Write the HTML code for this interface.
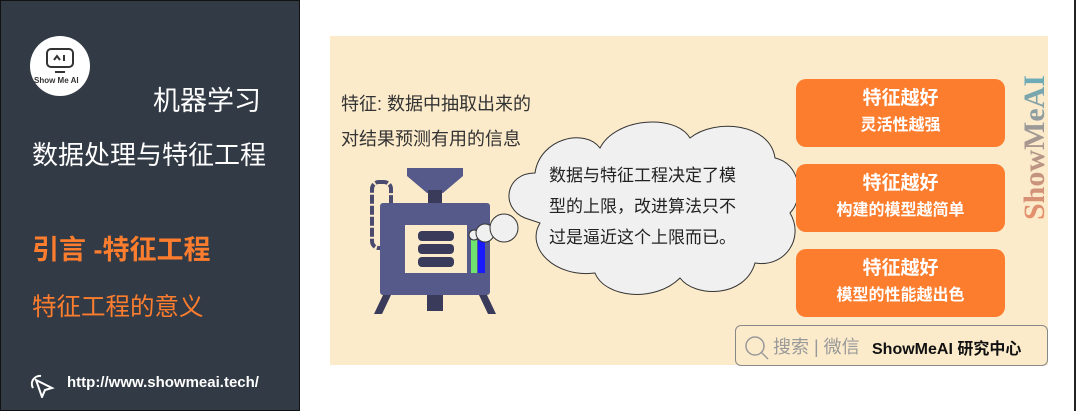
<!DOCTYPE html>
<html><head><meta charset="utf-8"><style>
*{margin:0;padding:0;box-sizing:border-box}
body{width:1080px;height:411px;background:#fff;position:relative;overflow:hidden;font-family:"Liberation Sans","Noto Sans CJK SC",sans-serif}
.left{position:absolute;left:0;top:0;width:300px;height:411px;background:#323a45;border:1px solid #111}
.t{position:absolute;white-space:nowrap}
.panel{position:absolute;left:330px;top:36px;width:718px;height:329px;background:#fcebcb}
.box{position:absolute;left:796px;width:209px;height:68px;background:#fd7d2e;border-radius:10px;color:#fff;text-align:center;font-weight:bold}
.box .a{font-size:19px;margin-top:8px;line-height:24px}
.box .b{font-size:16px;margin-top:5px;line-height:20px}
</style></head><body>
<div class="left">
 <div style="position:absolute;left:29px;top:35px;width:60px;height:60px;border-radius:50%;background:#fff"></div>
 <svg style="position:absolute;left:44px;top:46px" width="30" height="28" viewBox="0 0 30 28"><rect x="2" y="2" width="26" height="18" rx="4" fill="none" stroke="#333" stroke-width="2"/><path d="M9 13l3-4 3 4M19 8v6M10 25h10" stroke="#333" stroke-width="2" fill="none"/></svg>
 <div class="t" style="left:33px;top:75px;font-size:8px;font-weight:bold;color:#333">Show Me AI</div>
 <div class="t" style="left:152px;top:78px;font-size:27px;color:#fff">机器学习</div>
 <div class="t" style="left:31px;top:134px;font-size:26px;color:#fff">数据处理与特征工程</div>
 <div class="t" style="left:31px;top:227px;font-size:27px;font-weight:bold;color:#fd7d2e">引言 -特征工程</div>
 <div class="t" style="left:31px;top:287px;font-size:24.5px;color:#fd7d2e">特征工程的意义</div>
 <svg style="position:absolute;left:29px;top:373px" width="26" height="24" viewBox="0 0 26 24"><path d="M6 6l16 8-7 2-3 7z" fill="none" stroke="#fff" stroke-width="2"/><path d="M3 14a8 8 0 0 1 8-12" fill="none" stroke="#fff" stroke-width="2"/></svg>
 <div class="t" style="left:66px;top:373px;font-size:15px;font-weight:bold;color:#fff">http://www.showmeai.tech/</div>
</div>
<div style="position:absolute;left:1074px;top:0;width:2px;height:411px;background:#222"></div>
<div class="panel"></div>
<div class="t" style="left:341px;top:90px;font-size:18px;color:#333">特征: 数据中抽取出来的</div>
<div class="t" style="left:341px;top:125px;font-size:18px;color:#333">对结果预测有用的信息</div>
<svg style="position:absolute;left:0;top:0" width="1080" height="411" viewBox="0 0 1080 411">
 <rect x="372" y="182" width="19" height="66" rx="7" fill="none" stroke="#4a4b6e" stroke-width="4" stroke-dasharray="9 2"/>
 <path d="M407 168h56v8l-20 17h-16l-20-17z" fill="#565a8a"/>
 <rect x="428" y="190" width="14" height="14" fill="#3a3b5a"/>
 <rect x="380" y="203" width="110" height="92" rx="3" fill="#565a8a"/>
 <rect x="405" y="225" width="62" height="48" fill="#fcebcb"/>
 <rect x="418" y="231" width="36" height="10" rx="4" fill="#3a3b5a"/><rect x="418" y="244" width="36" height="10" rx="4" fill="#3a3b5a"/><rect x="418" y="257" width="36" height="10" rx="4" fill="#3a3b5a"/>
 <rect x="471" y="240" width="6" height="33" fill="#6fe36f"/><rect x="478" y="240" width="7" height="33" fill="#1a1aff"/>
 <path d="M383 295l-9 19h8l9-19zM487 295l9 19h-8l-9-19z" fill="#3a3b5a"/><rect x="427" y="295" width="16" height="16" fill="#3a3b5a"/>
 <circle cx="474" cy="235" r="5" fill="#f0f0f0" stroke="#333"/><circle cx="485" cy="233" r="9" fill="#f0f0f0" stroke="#333"/>
 <circle cx="504" cy="228" r="14" fill="#f0f0f0" stroke="#333"/>
 <path d="M525 218c-25-10-20-45 10-45c5-35 50-45 65-25c15-30 75-35 90-10c25-20 80-15 85 20c25 5 30 40 15 55c15 25-5 55-35 50c-10 35-60 35-75 15c-25 25-75 20-85-5c-40 5-70-25-55-50z" fill="#f0f0f0" stroke="#333"/>
</svg>
<div class="t" style="left:549px;top:160px;font-size:17px;color:#222;line-height:31px">数据与特征工程决定了模<br>型的上限，改进算法只不<br>过是逼近这个上限而已。</div>
<div class="box" style="top:79px"><div class="a">特征越好</div><div class="b">灵活性越强</div></div>
<div class="box" style="top:164px"><div class="a">特征越好</div><div class="b">构建的模型越简单</div></div>
<div class="box" style="top:249px"><div class="a">特征越好</div><div class="b">模型的性能越出色</div></div>
<div class="t" style="left:1020px;top:30px;font-size:30px;line-height:30px;font-weight:bold;font-family:'Liberation Serif',serif;writing-mode:vertical-rl;transform:rotate(180deg);height:190px;text-align:left;background:linear-gradient(#e98f6a,#999 50%,#3cc0d8);-webkit-background-clip:text;color:transparent">ShowMeAI</div>
<div style="position:absolute;left:735px;top:325px;width:313px;height:41px;border:1px solid #888;border-radius:6px;background:#fcebcb"></div>
<svg style="position:absolute;left:743px;top:334px" width="30" height="26"><circle cx="12" cy="12" r="9" fill="none" stroke="#999" stroke-width="1.5"/><path d="M18 18l7 7" stroke="#999" stroke-width="1.5"/></svg>
<div class="t" style="left:773px;top:333px;font-size:18px;color:#999">搜索 | 微信</div>
<div class="t" style="left:872px;top:335px;font-size:16px;font-weight:bold;color:#111">ShowMeAI 研究中心</div>
</body></html>
